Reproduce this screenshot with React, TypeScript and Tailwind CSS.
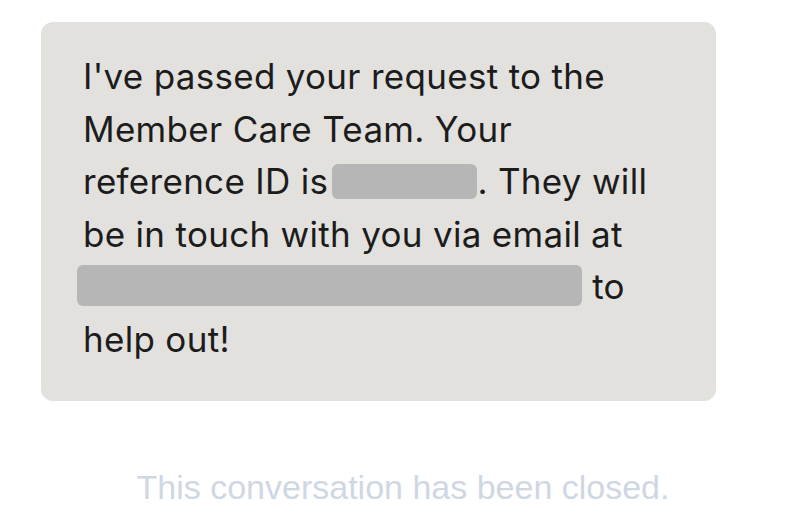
import React from "react";

const Redacted = ({ width, height, className }: { width: string; height: string; className?: string }) => (
  <span
    className={`inline-block rounded-[6px] bg-[#b6b6b6] align-middle ${width} ${height} ${className ?? ""}`}
  />
);

export default function App() {
  return (
    <div className="min-h-[523px] w-full bg-white font-['Inter',sans-serif]">
      <div className="pt-[22px] pl-[41px]">
        <div className="w-[675px] rounded-[12px] bg-[#e2e1dd] pl-[42px] pr-[30px] pt-[28px] pb-[36px] text-[35px] leading-[52.5px] tracking-[0.3px] text-[#1c1c1c]">
          <p>
            I've passed your request to the
            <br />
            Member Care Team. Your
            <br />
            reference ID is{" "}
            <Redacted width="w-[145px]" height="h-[35px]" className="-ml-[6px] -mt-[6px]" />
            . They will
            <br />
            be in touch with you via email at
            <br />
            <Redacted width="w-[505px]" height="h-[41px]" className="-ml-[6px] -mt-[8px]" />
            {" "}to
            <br />
            help out!
          </p>
        </div>
      </div>
      <p className="mt-[66px] text-center font-['Liberation_Sans',sans-serif] text-[34px] leading-[40px] text-[#cfd7e3]">
        This conversation has been closed.
      </p>
    </div>
  );
}
